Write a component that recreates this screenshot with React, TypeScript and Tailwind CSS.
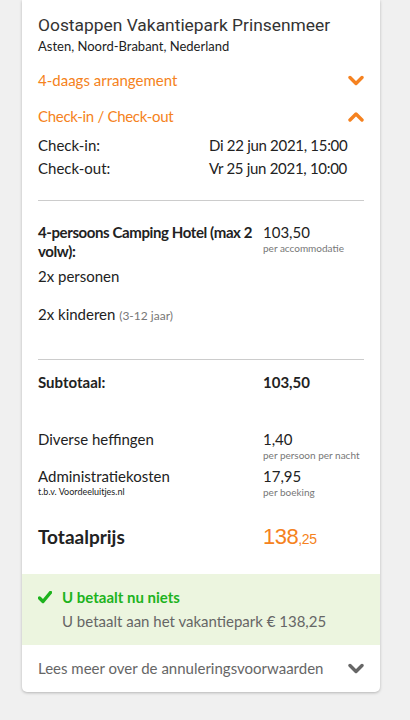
import React from "react";

const Chevron = ({ up = false, color = "#f58220" }: { up?: boolean; color?: string }) => (
  <svg width="16" height="11" viewBox="0 0 16 11" className="shrink-0">
    <path
      d={up ? "M2 9 L8 3 L14 9" : "M2 2.5 L8 8.5 L14 2.5"}
      fill="none"
      stroke={color}
      strokeWidth="3.4"
      strokeLinecap="round"
      strokeLinejoin="round"
    />
  </svg>
);

const body = { fontFamily: "Lato, 'Open Sans', sans-serif" };

export default function App() {
  return (
    <div className="min-h-[720px] w-[410px] bg-[#f0f0f0]" style={body}>
      <div className="ml-[22px] w-[358px] bg-white rounded-b-[5px] shadow-[0_1px_3px_rgba(0,0,0,0.25)]">
        <div className="px-4 pt-[14px]">
          <div className="text-[17.4px] leading-[22px] text-[#333]" style={{ fontFamily: "Roboto, sans-serif" }}>
            Oostappen Vakantiepark Prinsenmeer
          </div>
          <div className="text-[13px] leading-[16px] text-[#222] mt-[2px]">Asten, Noord-Brabant, Nederland</div>

          <div className="flex items-center justify-between mt-[16px] h-[20px]">
            <span className="text-[15px] text-[#f58220]">4-daags arrangement</span>
            <Chevron />
          </div>
          <div className="flex items-center justify-between mt-[16px] h-[20px]">
            <span className="text-[15px] text-[#f58220] tracking-[-0.3px]">Check-in / Check-out</span>
            <Chevron up />
          </div>
          <div className="grid grid-cols-[171px_1fr] text-[15px] text-[#222] leading-[23px] mt-[8px]">
            <span>Check-in:</span>
            <span className="tracking-[-0.3px]">Di 22 jun 2021, 15:00</span>
            <span>Check-out:</span>
            <span className="tracking-[-0.3px]">Vr 25 jun 2021, 10:00</span>
          </div>

          <div className="border-t border-[#ccc] mt-[20px]" />

          <div className="grid grid-cols-[225px_1fr] mt-[22px]">
            <div className="text-[15px] font-bold text-[#222] leading-[19px] tracking-[-0.4px]">4-persoons Camping Hotel (max 2 volw):</div>
            <div>
              <div className="text-[15px] text-[#222] leading-[19px]">103,50</div>
              <div className="text-[10px] text-[#777] leading-[12px]">per accommodatie</div>
            </div>
          </div>
          <div className="text-[15px] text-[#222] mt-[6px] leading-[19px]">2x personen</div>
          <div className="text-[15px] text-[#222] mt-[19px] leading-[19px]">
            2x kinderen <span className="text-[12px] text-[#777]">(3-12 jaar)</span>
          </div>

          <div className="border-t border-[#ccc] mt-[34px]" />

          <div className="grid grid-cols-[225px_1fr] mt-[13px] text-[15px] font-bold text-[#222] leading-[19px]">
            <span>Subtotaal:</span>
            <span>103,50</span>
          </div>

          <div className="grid grid-cols-[225px_1fr] mt-[38px]">
            <div className="text-[15px] text-[#222] leading-[19px]">Diverse heffingen</div>
            <div>
              <div className="text-[15px] text-[#222] leading-[19px]">1,40</div>
              <div className="text-[10px] text-[#777] leading-[12px]">per persoon per nacht</div>
            </div>
          </div>
          <div className="grid grid-cols-[225px_1fr] mt-[6px]">
            <div>
              <div className="text-[15px] text-[#222] leading-[19px]">Administratiekosten</div>
              <div className="text-[9px] text-[#222] leading-[11px]">t.b.v. Voordeeluitjes.nl</div>
            </div>
            <div>
              <div className="text-[15px] text-[#222] leading-[19px]">17,95</div>
              <div className="text-[10px] text-[#777] leading-[12px]">per boeking</div>
            </div>
          </div>

          <div className="grid grid-cols-[225px_1fr] mt-[22px] items-baseline">
            <span className="text-[19px] font-bold text-[#222]">Totaalprijs</span>
            <span className="text-[#f58220]" style={{ fontFamily: "'Liberation Sans', Arial, sans-serif" }}>
              <span className="text-[22px] tracking-[-0.5px]">138</span>
              <span className="text-[14px] tracking-[-0.3px]">,25</span>
            </span>
          </div>
        </div>

        <div className="mt-[21px] bg-[#ecf5df] px-4 py-[14px]">
          <div className="flex items-center gap-[10px]">
            <svg width="14" height="13" viewBox="0 0 14 13">
              <path d="M1.5 7 L5 10.5 L12.5 1.5" fill="none" stroke="#1db31d" strokeWidth="3.4" strokeLinecap="round" strokeLinejoin="round" />
            </svg>
            <span className="text-[15px] font-bold text-[#1db31d] leading-[19px]">U betaalt nu niets</span>
          </div>
          <div className="pl-[24px] text-[15px] text-[#666] mt-[5px] leading-[19px]">U betaalt aan het vakantiepark € 138,25</div>
        </div>

        <div className="flex items-center justify-between px-4 h-[47px]">
          <span className="text-[15px] text-[#666]">Lees meer over de annuleringsvoorwaarden</span>
          <Chevron color="#666" />
        </div>
      </div>
    </div>
  );
}
